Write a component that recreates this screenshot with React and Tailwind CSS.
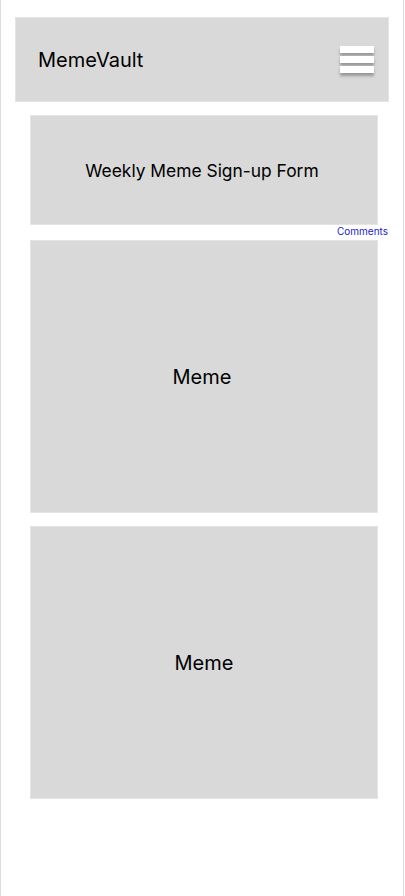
import React from 'react';

const MemeCard = ({ shift }) => (
  <div className={`ml-[29px] w-[348px] h-[273px] bg-[#d9d9d9] border border-[#e4e4e4] flex items-center justify-center ${shift ? 'pr-[4px]' : ''}`}>
    <span className="text-[20px] text-black">Meme</span>
  </div>
);

const App = () => {
  return (
    <div className="w-[404px] min-h-[896px] bg-white border-x border-[#dcdcdc] font-['Inter',sans-serif]">
      {/* Header */}
      <div className="pt-[17px] pl-[14px]">
        <div className="w-[374px] h-[85px] bg-[#d9d9d9] border border-[#e4e4e4] flex items-center justify-between pl-[22px] pr-[14px]">
          <h1 className="text-[20px] text-black font-normal">MemeVault</h1>
          <button className="flex flex-col gap-[3px] w-[34px]">
            <span className="block h-[7px] w-full bg-white shadow-[0_3px_3px_rgba(0,0,0,0.3)]"></span>
            <span className="block h-[7px] w-full bg-white shadow-[0_3px_3px_rgba(0,0,0,0.3)]"></span>
            <span className="block h-[7px] w-full bg-white shadow-[0_3px_3px_rgba(0,0,0,0.3)]"></span>
          </button>
        </div>
      </div>

      {/* Sign-up form */}
      <div className="mt-[13px] ml-[29px] w-[348px] h-[110px] bg-[#d9d9d9] border border-[#e4e4e4] flex items-center justify-center pt-[3px] pr-[4px]">
        <span className="text-[17.4px] text-black">Weekly Meme Sign-up Form</span>
      </div>

      {/* Comments link */}
      <div className="h-[15px] flex justify-end items-start pr-[15px]">
        <a className="text-[10px] text-[#2222cc] leading-[12px]">Comments</a>
      </div>

      {/* Memes */}
      <div className="flex flex-col gap-[13px]">
        <MemeCard shift />
        <MemeCard />
      </div>
    </div>
  );
};

export default App;
